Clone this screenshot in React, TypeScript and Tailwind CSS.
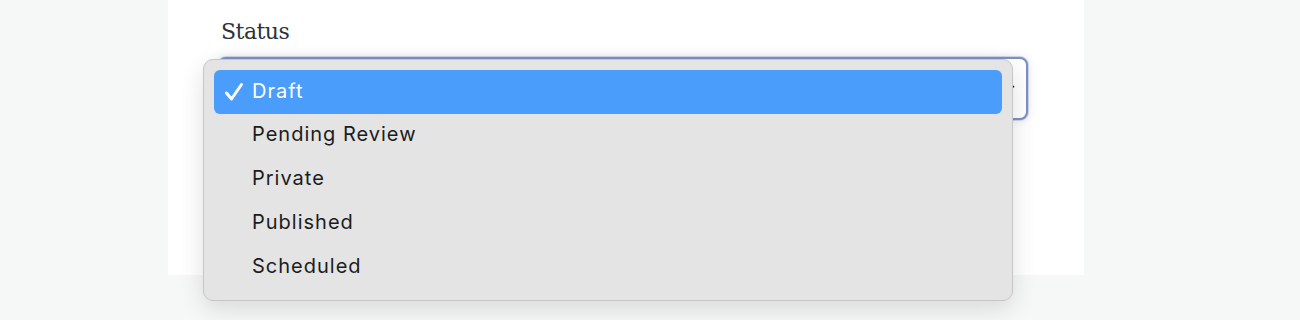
import React from "react";

const items = ["Draft", "Pending Review", "Private", "Published", "Scheduled"];

export default function App() {
  return (
    <div className="w-full h-[320px] bg-[#f6f7f7] overflow-hidden">
      <div className="ml-[168px] w-[916px] h-[275px] bg-white pl-[53px] pt-[17px]">
        <div
          className="text-[22px] leading-[30px] tracking-[-0.5px] text-[#2c3338]"
          style={{ fontFamily: '"DejaVu Serif", "Liberation Serif", serif' }}
        >
          Status
        </div>
        <div className="relative mt-[10px] w-[810px] h-[63px] ml-[-3px]">
          <div className="w-full h-full rounded-[8px] border-2 border-[#7d90c2] bg-white shadow-[0_0_0_1px_rgba(120,140,190,0.3),0_0_8px_rgba(120,140,190,0.25)] flex items-center justify-end pr-[10px]">
            <svg width="14" height="10" viewBox="0 0 14 10" className="text-[#1e1e1e]">
              <path d="M2 2 L7 7 L12 2" fill="none" stroke="currentColor" strokeWidth="1.6" />
            </svg>
          </div>
          <div
            className="absolute left-[-15px] top-[2px] w-[810px] h-[242px] rounded-[10px] bg-[#e4e4e4] border border-[#c6c6c6] shadow-[0_8px_24px_rgba(0,0,0,0.12)] p-[10px]"
            style={{ fontFamily: 'Inter, "Liberation Sans", sans-serif' }}
          >
            {items.map((it, i) => (
              <div
                key={it}
                className={
                  i === 0
                    ? "h-[44px] rounded-[6px] bg-[#4a9dfa] text-white flex items-center pl-[10px] pb-[3px] text-[20px] tracking-[1px]"
                    : "h-[44px] text-[#1c1c1c] flex items-center pl-[38px] pb-[4px] text-[20px] tracking-[1px]"
                }
              >
                {i === 0 && (
                  <svg width="20" height="20" viewBox="0 0 20 20" className="mr-[8px] mt-[3px]">
                    <path d="M2.5 11 L7.5 17 L17.5 2.5" fill="none" stroke="white" strokeWidth="3" strokeLinecap="round" strokeLinejoin="round" />
                  </svg>
                )}
                {it}
              </div>
            ))}
          </div>
        </div>
      </div>
    </div>
  );
}
